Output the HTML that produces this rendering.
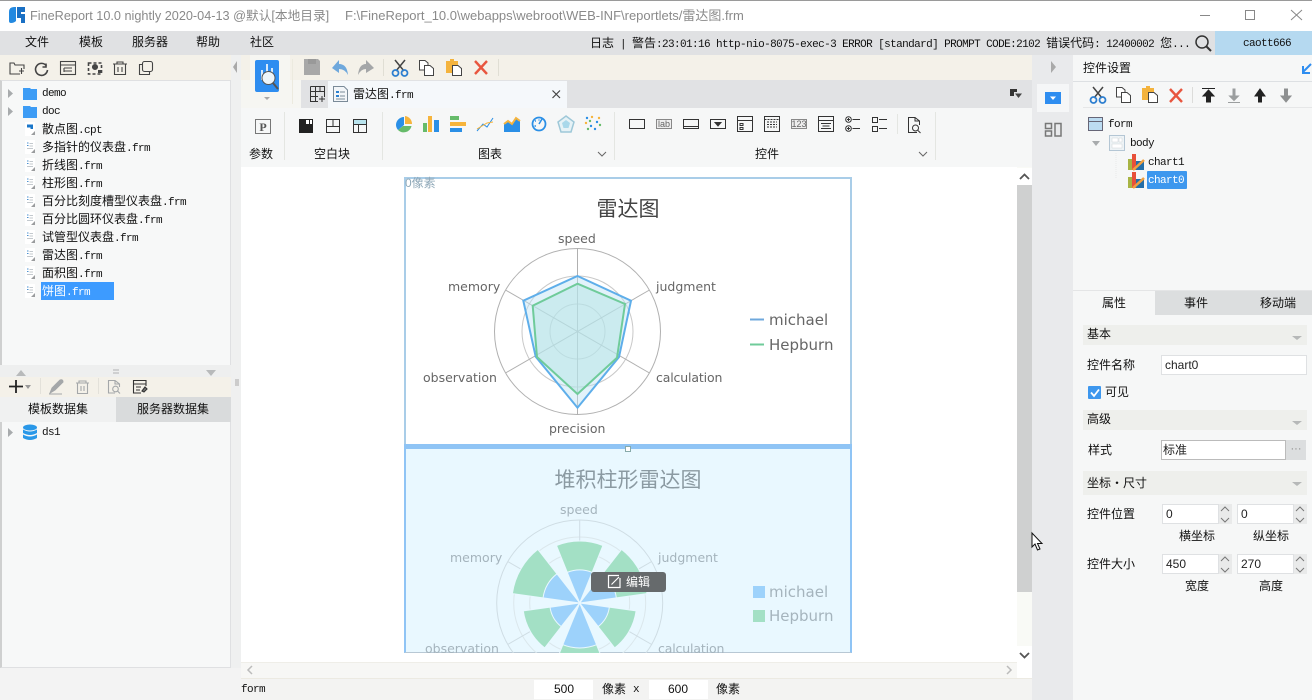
<!DOCTYPE html>
<html><head><meta charset="utf-8"><title>FineReport</title>
<style>
html,body{margin:0;padding:0;width:1312px;height:700px;overflow:hidden;background:#fff}
body{position:relative;font-family:"Liberation Sans","Noto Sans CJK SC",sans-serif;font-size:12px;color:#111}
.b{position:absolute}
.t{position:absolute;white-space:nowrap;line-height:14px;height:14px}
.m{font-family:"Liberation Mono","Noto Sans CJK SC",monospace;font-size:11px;letter-spacing:-.6px}
.m b{font-weight:400;font-size:12px;letter-spacing:0;font-family:"Noto Sans CJK SC",sans-serif}
.c{transform:translateX(-50%)}
svg{position:absolute;left:0;top:0}
.ch{font-family:"DejaVu Sans",sans-serif;font-size:12.5px;color:#666}
.ch2{font-family:"DejaVu Sans",sans-serif;font-size:12.5px;color:#a5b4bd}
.in{position:absolute;background:#fff;border:1px solid #dfe1e3;box-sizing:border-box;line-height:18px;padding-left:3px;font-size:12px;color:#222}
</style></head><body>

<!-- backgrounds -->
<div class="b" style="left:0;top:0;width:1312px;height:31px;background:#fff;border-top:1px solid #9a9a9a;box-sizing:border-box"></div>
<div class="b" style="left:0;top:31px;width:1312px;height:24px;background:#e0e1e3"></div>
<div class="b" style="left:1215px;top:31px;width:97px;height:24px;background:#b5d9f0"></div>
<div class="b" style="left:0;top:55px;width:231px;height:25px;background:#f4f1e9"></div>
<div class="b" style="left:0;top:80px;width:231px;height:288px;background:#f7f8f8;border:1px solid #dfe0e2;border-left:2px solid #cfd0d0;box-sizing:border-box"></div>
<div class="b" style="left:0;top:365px;width:231px;height:12px;background:#eeefef"></div>
<div class="b" style="left:0;top:377px;width:231px;height:20px;background:#f4f1e9"></div>
<div class="b" style="left:0;top:397px;width:116px;height:25px;background:#f0f1f1"></div>
<div class="b" style="left:116px;top:397px;width:115px;height:25px;background:#d9dbdc"></div>
<div class="b" style="left:0;top:422px;width:231px;height:246px;background:#f7f8f8;border-right:1px solid #dfe0e2;border-bottom:1px solid #dfe0e2;border-left:2px solid #cfd0d0;box-sizing:border-box"></div>
<div class="b" style="left:0;top:668px;width:241px;height:32px;background:#f3f3f3"></div>
<div class="b" style="left:231px;top:55px;width:10px;height:613px;background:#eff0f0"></div>
<div class="b" style="left:241px;top:55px;width:792px;height:25px;background:#f4f1e9"></div>
<div class="b" style="left:250px;top:55px;width:40px;height:50px;background:#f6f6f2"></div>
<div class="b" style="left:301px;top:80px;width:732px;height:28px;background:#e1e2e4"></div>
<div class="b" style="left:241px;top:80px;width:60px;height:28px;background:#f6f6f2"></div>
<div class="b" style="left:328px;top:81px;width:239px;height:27px;background:#f5f8fb"></div>
<div class="b" style="left:241px;top:108px;width:792px;height:59px;background:#f6f7f7"></div>
<div class="b" style="left:241px;top:167px;width:776px;height:495px;background:#fff"></div>
<div class="b" style="left:1017px;top:167px;width:15px;height:495px;background:#f9faf6"></div>
<div class="b" style="left:1017px;top:185px;width:15px;height:407px;background:#cfd0d0"></div>
<div class="b" style="left:1017px;top:168px;width:16px;height:17px;background:#fff"></div>
<div class="b" style="left:1017px;top:646px;width:16px;height:17px;background:#fff"></div>
<div class="b" style="left:241px;top:662px;width:776px;height:17px;background:#f7f7f5;border-top:1px solid #efeee8;box-sizing:border-box"></div>
<div class="b" style="left:241px;top:678px;width:792px;height:22px;background:#f3f3f2;border-top:1px solid #eceae2;box-sizing:border-box"></div>
<div class="b" style="left:534px;top:680px;width:59px;height:19px;background:#fff"></div>
<div class="b" style="left:649px;top:680px;width:59px;height:19px;background:#fff"></div>
<div class="b" style="left:1032px;top:55px;width:41px;height:645px;background:#e9eaec"></div>
<div class="b" style="left:1037px;top:84px;width:32px;height:28px;background:#f5f6f7"></div>
<div class="b" style="left:1073px;top:55px;width:239px;height:645px;background:#f6f7f7"></div>
<div class="b" style="left:1073px;top:81px;width:239px;height:1px;background:#dde0e3"></div>
<div class="b" style="left:1083px;top:107px;width:229px;height:1px;background:#e6e7e8"></div>
<div class="b" style="left:1073px;top:290px;width:239px;height:1px;background:#e4e5e6"></div>
<div class="b" style="left:1155px;top:291px;width:157px;height:24px;background:#dcdedf"></div>
<div class="b" style="left:1083px;top:325px;width:224px;height:20px;background:#eeefec"></div>
<div class="b" style="left:1083px;top:410px;width:224px;height:20px;background:#eeefec"></div>
<div class="b" style="left:1083px;top:471px;width:224px;height:24px;background:#eeefec"></div>
<div class="b" style="left:1218px;top:504px;width:14px;height:20px;background:#e9eaea"></div>
<div class="b" style="left:1293px;top:504px;width:14px;height:20px;background:#e9eaea"></div>
<div class="b" style="left:1218px;top:554px;width:14px;height:20px;background:#e9eaea"></div>
<div class="b" style="left:1293px;top:554px;width:14px;height:20px;background:#e9eaea"></div>

<!-- chart widget area -->
<div class="b" style="left:404px;top:177px;width:448px;height:268px;background:#fff;border:2px solid #a9cde8;border-bottom:none;box-sizing:border-box"></div>
<div class="b" style="left:404px;top:444px;width:448px;height:209px;background:#e9f8ff;border:2px solid #8fc4f5;border-top:5px solid #8fc4f5;border-bottom:1px solid #b8c8d4;box-sizing:border-box"></div>

<svg width="1312" height="700" viewBox="0 0 1312 700" fill="none">
<!-- logo -->
<path d="M9 12Q9 7 14 7H16V21Q14 23 11 23Q9 23 9 21Z" fill="#2389e0"/><path d="M17 7H25V12H21V14H25V23H21V18H17Z" fill="#1a70c4"/>
<!-- window controls -->
<path d="M1200 15.500H1210" stroke="#888"/><rect x="1245.500" y="10.500" width="9" height="9" stroke="#888"/><path d="M1291 10L1302 20M1302 10L1291 20" stroke="#888"/>
<!-- search -->
<circle cx="1202" cy="42" r="6" stroke="#333" stroke-width="1.500"/><path d="M1206.500 46.500L1211 51" stroke="#333" stroke-width="2"/>
<!-- left toolbar -->
<g stroke="#444" stroke-width="1.100">
<path d="M20 74H10V63H14L15 65H24V69M19 71H24M21.500 68V74"/>
<path d="M46 63.500V67H42.500M46.500 66A6 6 0 1 0 47.500 70" stroke-width="1.600"/>
<rect x="60.500" y="61.500" width="15" height="13"/><path d="M60.500 65H75.500M64 68H72M64 71H72M64 68V72"/>
<path d="M88.500 63H101.500V74H88.500Z" stroke-dasharray="3 2" stroke-width="1.600"/><circle cx="95" cy="67" r="2.500" fill="#444"/><rect x="98" y="70" width="3" height="3" fill="#444" stroke="none"/>
<path d="M113 64H127M117 64V62H123V64M114.500 64V74.500H125.500V64M118 67V72M122 67V72"/>
<rect x="142.500" y="61.500" width="10" height="10" rx="2"/><path d="M142 64.500H139.500V74.500H149.500V72"/>
</g>
<path d="M237 61V73L233 67Z" fill="#a9a9a9"/>
<!-- tree arrows -->
<path d="M8 89L13 93.500L8 98ZM8 107L13 111.500L8 116ZM8 428L13 432.500L8 437Z" fill="#a8abad"/>
<!-- folders -->
<path d="M23 88H30L31 89H37V100H23Z" fill="#3d9cf5"/><path d="M23 106H30L31 107H37V118H23Z" fill="#3d9cf5"/>
<!-- files -->
<path d="M25 122H35V133L33 136H25Z" fill="#fff"/><path d="M27 124.500H33V129H30.500V127.500H27Z" fill="#1976c9"/><path d="M31 135L35 131V135Z" fill="#9a9c9e"/>
<g id="f"><path d="M25 140H35V151L33 154H25Z" fill="#fff"/><path d="M29.500 143.500H33M29.500 146H33M27 148.500H33" stroke="#c3c9ce"/><path d="M27 143H28.500M27 145.500H28.500" stroke="#4a90d0"/><path d="M31 153L35 149V153Z" fill="#9a9c9e"/></g>
<use href="#f" y="18"/><use href="#f" y="36"/><use href="#f" y="54"/><use href="#f" y="72"/><use href="#f" y="90"/><use href="#f" y="108"/><use href="#f" y="126"/><use href="#f" y="144"/>
<!-- splitter -->
<path d="M16 376H26L21 370ZM206 370H216L211 376Z" fill="#b8babb"/><path d="M113 370H119M113 373H119" stroke="#b0b2b3"/>
<path d="M236 379V386M238 379V386" stroke="#a8a8a8"/>
<!-- lower left toolbar -->
<path d="M9 386.500H23M16 380V393" stroke="#222" stroke-width="1.800"/><path d="M25 385H31L28 389Z" fill="#999"/>
<path d="M40.500 378V394M98.500 378V394" stroke="#e3e1da"/>
<path d="M50 393L52 388L60 380Q63 379 63 382L55 390ZM49 394H62" fill="#a4a7a9" stroke="#a4a7a9"/>
<g stroke="#a4a7a9" stroke-width="1.100"><path d="M76 383H89M79 383V381H86V383M77.500 383V393.500H87.500V383M81 386V391M84 386V391"/>
<path d="M115 393H108.500V380.500H115L119.500 384V387M115 380.500V384H119.500"/><circle cx="115.500" cy="389" r="2.800"/><path d="M117.500 391L120 393.500"/></g>
<g stroke="#333" stroke-width="1.100"><path d="M146 386V380.500H133.500V393H141M133.500 384H146M136 387H141M136 390H140"/><path d="M142 391L145 387L147 389L144 392Z" fill="#777"/></g>
<!-- db -->
<ellipse cx="30" cy="427.500" rx="7" ry="3" fill="#2a98e8"/><path d="M23 429.500Q30 433.500 37 429.500V433Q30 437 23 433ZM23 434.500Q30 438.500 37 434.500V438Q30 442 23 438Z" fill="#2a98e8"/>
<!-- main button -->
<rect x="255" y="60" width="24" height="32" rx="2" fill="#2e8df0"/>
<path d="M262 70V80M267 64V74M272 68V80" stroke="#d6e9fb" stroke-width="2"/><circle cx="268.500" cy="78" r="6.500" fill="#eef5fa" stroke="#555"/><path d="M273 83L278 89" stroke="#555" stroke-width="2"/>
<path d="M264 97H270L267 100Z" fill="#a8a8a8"/><path d="M292.500 59V104" stroke="#eceadf"/>
<!-- main toolbar -->
<path d="M304 59H318L320 61V75H304Z" fill="#a8a8a8"/><path d="M308 59H316V64H308Z" fill="#999"/>
<path d="M332 68L339 60V64Q347 64 348 75Q345 69 339 69V73Z" fill="#6fa8dc"/>
<path d="M374 68L366 60V64Q359 64 358 75Q361 69 366 69V73Z" fill="#a4a6a8"/>
<path d="M383.500 59V76M498.500 59V76" stroke="#e0ded4"/>
<g id="sc"><path d="M395 60L404 71M405 60L396 71" stroke="#444" stroke-width="1.500"/><circle cx="395.500" cy="73" r="3" stroke="#2e7fd0" stroke-width="1.800"/><circle cx="404.500" cy="73" r="3" stroke="#2e7fd0" stroke-width="1.800"/></g>
<g id="cp"><path d="M419.500 60.500H425L428 63V70H419.500Z" fill="#fff" stroke="#444"/><path d="M424.500 65.500H430L433.500 68.500V75.500H424.500Z" fill="#fff" stroke="#444"/></g>
<g id="ps"><path d="M446 61H450V59H454V61H458V73H446Z" fill="#f4b33d"/><path d="M452.500 65.500H458L461.500 68.500V75.500H452.500Z" fill="#fff" stroke="#444"/></g>
<path id="xx" d="M475 61L487 74M487 61L475 74" stroke="#e8563f" stroke-width="2.400"/>
<!-- tab icons -->
<path d="M310.500 86.500H324.500V97M310.500 86.500V101.500H318M310.500 91.500H324.500M310.500 96.500H318M315.500 86.500V101.500M320 86.500V91.500" stroke="#333"/><path d="M322 96V102M319 99H325" stroke="#333"/>
<path d="M333.500 86.500H344L347.500 90V101.500H333.500Z" fill="#f2f5f8" stroke="#7a8a98"/><rect x="336" y="91" width="3" height="2" fill="#2a7fd0"/><rect x="336" y="95" width="3" height="2" fill="#2a7fd0"/><path d="M340 92H345M340 96H345M336 99H345" stroke="#7a8a98"/>
<path d="M552.500 90.500L560 98M560 90.500L552.500 98" stroke="#444" stroke-width="1.200"/>
<path d="M1010 89H1017V92H1014V96H1010Z" fill="#333"/><path d="M1015 93.500H1022L1018.500 98Z" fill="#444"/>
<!-- widget row separators -->
<path d="M284.500 112V160M382.500 112V160M614.500 112V160M935.500 112V160M897.500 114V134" stroke="#e4e6e2"/>
<!-- P -->
<rect x="255.500" y="119.500" width="15" height="14" stroke="#777"/><text x="263" y="131" font-family="Liberation Serif" font-size="12" font-weight="700" fill="#555" text-anchor="middle">P</text>
<rect x="299" y="119" width="14" height="14" fill="#222"/><rect x="306" y="120" width="3" height="4" fill="#fff"/><rect x="310" y="120" width="2" height="4" fill="#fff"/>
<rect x="326.500" y="119.500" width="13" height="13" stroke="#333"/><path d="M326.500 126.500H339.500M333 119.500V126.500" stroke="#333"/>
<rect x="353" y="119" width="14" height="5" fill="#b9e4ee"/><rect x="353.500" y="119.500" width="13" height="13" stroke="#333"/><path d="M353.500 124.500H366.500M358.500 124.500V132.500" stroke="#333"/>
<!-- charts -->
<path d="M404 125V117A8 8 0 0 0 396 125Z" fill="#2a8fe6"/><path d="M405 116A8 8 0 0 1 412 124H405Z" fill="#f6b43c"/><path d="M398 130A8 8 0 0 0 411.500 126H403Z" fill="#66bb6a"/><path d="M396 125A8 8 0 0 0 398 130L404 125Z" fill="#2a8fe6"/>
<rect x="423" y="123" width="4" height="9" fill="#66bb6a"/><rect x="428" y="116" width="4" height="16" fill="#f6b43c"/><rect x="434" y="120" width="5" height="12" fill="#2a8fe6"/>
<rect x="450" y="116" width="9" height="4" fill="#66bb6a"/><rect x="450" y="122" width="16" height="4" fill="#f6b43c"/><rect x="450" y="128" width="12" height="4" fill="#2a8fe6"/>
<path d="M477 131L483 124L487 127L493 118" stroke="#2a8fe6"/><path d="M477 129L482 126L487 123L493 122" stroke="#f6b43c"/>
<path d="M504 124L508 121L512 124L516 118L520 121V132H504Z" fill="#2a8fe6"/><path d="M504 124L508 121L512 124L516 118L520 121" stroke="#f6b43c" stroke-width="2"/>
<circle cx="539" cy="124" r="6.500" stroke="#2a8fe6" stroke-width="1.800"/><path d="M539 124L542 119M535 121H536M539 119.500V120.500M534.500 126H536" stroke="#2a8fe6" stroke-width="1.500"/>
<path d="M566 116L574 122L571 132H561L558 122Z" stroke="#9ec8d8" stroke-width="1.500" fill="#e6f2f6"/><path d="M566 120L570 123L568.500 128H563.500L562 123Z" fill="#a9d8ea"/>
<g fill="#2a8fe6"><circle cx="587" cy="118" r="1.200"/><circle cx="597" cy="122" r="1.200"/><circle cx="591" cy="126" r="1.200"/><circle cx="595" cy="129" r="1.200"/></g>
<g fill="#f6b43c"><circle cx="592" cy="117" r="1.200"/><circle cx="586" cy="123" r="1.200"/><circle cx="599" cy="118" r="1.200"/></g>
<g fill="#66bb6a"><circle cx="590" cy="121" r="1.200"/><circle cx="588" cy="129" r="1.200"/><circle cx="600" cy="125" r="1.200"/></g>
<path d="M598 152L602 156L606 152M919 152L923 156L927 152" stroke="#666"/>
<!-- controls -->
<g stroke="#333" stroke-width="1">
<rect x="629.500" y="119.500" width="15" height="9"/>
<rect x="656.500" y="119.500" width="15" height="9" fill="#eee" stroke="#888"/>
<rect x="683.500" y="119.500" width="15" height="9"/><path d="M683 126.500H699"/>
<rect x="710.500" y="119.500" width="15" height="9"/><path d="M715 122.500H721L718 126Z" fill="#333"/>
<rect x="737.500" y="116.500" width="15" height="15"/><path d="M737.500 120.500H752.500M740 123.500H743V125.500H740ZM740 127.500H743V129.500H740Z"/>
<rect x="764.500" y="116.500" width="15" height="15"/><path d="M764.500 119.500H779.500M767 122H777M767 124.500H777M767 127H777" stroke-dasharray="2 1"/>
<rect x="791.500" y="119.500" width="15" height="9" fill="#eee" stroke="#888"/>
<rect x="818.500" y="116.500" width="15" height="15"/><path d="M818.500 120.500H833.500M821 123.500H831M822.500 126H829.500M821 128.500H831"/>
<circle cx="848.500" cy="119.500" r="2.800"/><circle cx="848.500" cy="128.500" r="2.800"/><path d="M852.500 119.500H860M852.500 128.500H860"/>
<rect x="872.500" y="117.500" width="5" height="5"/><rect x="872.500" y="126.500" width="5" height="5"/><path d="M879 119.500H887M879 128.500H887"/>
<path d="M917 132.500H908.500V117.500H915L919.500 121V125M915 117.500V121H919.500"/><circle cx="915.500" cy="128" r="3"/><path d="M918 130.500L920.500 133"/>
</g>
<path d="M848.500 118v3M847 119.500h3M848.500 127v3M847 128.500h3" stroke="#333"/>
<text x="664" y="127" font-family="Liberation Sans" font-size="9" fill="#666" text-anchor="middle">lab</text>
<text x="799" y="127" font-family="Liberation Sans" font-size="9" fill="#666" text-anchor="middle">123</text>
<!-- scrollbars -->
<path d="M1020 179L1024.500 174.500L1029 179M1020 653L1024.500 657.500L1029 653" stroke="#555" stroke-width="1.800"/>
<path d="M252 666L248 670L252 674" stroke="#bbb" stroke-width="1.500"/><path d="M1007 666L1011 670L1007 674" stroke="#bbb" stroke-width="1.500"/>
<!-- right column -->
<path d="M1051 61V73L1056 67Z" fill="#a9a9a9"/>
<rect x="1045" y="92" width="16" height="12" fill="#2e8df0"/><path d="M1050 96.500H1056L1053 100Z" fill="#fff"/>
<rect x="1045.500" y="123.500" width="6" height="5" stroke="#777" stroke-width="1.500"/><rect x="1045.500" y="131" width="6" height="5" stroke="#777" stroke-width="1.500"/><rect x="1055" y="123.500" width="6" height="12.500" stroke="#777" stroke-width="1.500"/>
<path d="M1303 72L1311 64M1303 66V73H1310" stroke="#2e8df0" stroke-width="2"/>
<!-- right toolbar -->
<use href="#sc" x="698" y="27"/><use href="#cp" x="697" y="27"/><use href="#ps" x="696" y="27"/>
<path d="M1170 89L1182 102M1182 89L1170 102" stroke="#e8563f" stroke-width="2.400"/>
<path d="M1192.500 87V103" stroke="#dcdcda"/>
<path d="M1202 88.500H1215M1208.500 90L1214 96H1210.500V102H1206.500V96H1203Z" stroke="#222" fill="#222"/>
<path d="M1233 89V96H1229.500L1234 100.500L1238.500 96H1235V89Z M1228 102.500H1240" fill="#9b9e9f" stroke="#9b9e9f"/>
<path d="M1260 89L1265 96H1261.500V102H1258.500V96H1255Z" fill="#222" stroke="#222"/>
<path d="M1286 102L1291 96H1287.500V89H1284.500V96H1281Z" fill="#8e9091" stroke="#8e9091"/>
<!-- right tree -->
<rect x="1088.500" y="117.500" width="14" height="13" fill="#bcdcf2" stroke="#667"/><path d="M1088.500 121.500H1102.500" stroke="#667"/>
<path d="M1092 141H1100L1096 146Z" fill="#a8abad"/>
<rect x="1109.500" y="135.500" width="15" height="15" fill="#eef3f6" stroke="#b4c6d4"/><path d="M1112 138H1118V142H1112ZM1119 138H1122V142H1119ZM1112 144H1122V148H1112Z" fill="#fff" stroke="#d0d5d8" stroke-width=".5"/>
<path d="M1116 153V178" stroke="#e8eaea" stroke-dasharray="1 1"/>
<g id="ci"><rect x="1128" y="159" width="5" height="11" fill="#a8b444"/><rect x="1132" y="154" width="4" height="16" fill="#e8503a"/><rect x="1136" y="161" width="8" height="9" fill="#246ea8"/><path d="M1133 170L1144 160" stroke="#f0a040" stroke-width="2.500"/></g>
<use href="#ci" y="18"/>
<!-- props -->
<path d="M1292 336H1302L1297 340ZM1292 421H1302L1297 425ZM1292 482H1302L1297 486Z" fill="#b6b8b8"/>
<rect x="1088" y="386" width="13" height="13" rx="1" fill="#3d97ee"/><path d="M1091 392.500L1094 396L1099 389.500" stroke="#fff" stroke-width="1.800"/>
<!-- spinners -->
<g id="sp" stroke="#777"><path d="M1221 511L1225 507L1229 511M1221 518L1225 522L1229 518"/></g>
<use href="#sp" x="75"/><use href="#sp" y="50"/><use href="#sp" x="75" y="50"/>

<!-- radar 1 -->
<g stroke="#b0b0b0"><circle cx="577.500" cy="331.500" r="83"/><circle cx="577.500" cy="331.500" r="55.500" stroke="#c8c8c8"/><circle cx="577.500" cy="331.500" r="27.500" stroke="#c8c8c8"/>
<path d="M577.500 248.500V414.500M505.500 290L649.500 373M649.500 290L505.500 373"/></g>
<path d="M577.500 276L631 300.700L619 357L577.500 407.700L535.700 356.700L523.300 300.700Z" fill="#bfe3f4" fill-opacity=".45"/>
<path d="M577.500 283.700L625 304L617 357.700L577.500 394L537 357L532.700 305.700Z" fill="#b4e4e4" fill-opacity=".5"/>
<path d="M577.500 276L631 300.700L619 357L577.500 407.700L535.700 356.700L523.300 300.700Z" stroke="#5eaeea" stroke-width="2"/>
<path d="M577.500 283.700L625 304L617 357.700L577.500 394L537 357L532.700 305.700Z" stroke="#6fcb9a" stroke-width="2"/>
<path d="M750 319.500H764" stroke="#6fa8dc" stroke-width="2"/><path d="M750 344.500H764" stroke="#6fcb9a" stroke-width="2"/>

<!-- radar 2 -->
<clipPath id="cl"><rect x="406" y="449" width="444" height="204"/></clipPath>
<g clip-path="url(#cl)">
<g stroke="#cfdde4"><circle cx="579.700" cy="603" r="83"/><circle cx="579.700" cy="603" r="66" stroke="#dbe7ec"/><circle cx="579.700" cy="603" r="50" stroke="#dbe7ec"/>
<path d="M579.700 520V686M507.700 561.500L651.700 644.500M651.700 561.500L507.700 644.500"/></g>
<g transform="translate(579.700 603)" stroke="#e9f8ff">
<g fill="#a3e0c5">
<path id="w1" d="M-23.200 -57.500A62 62 0 0 1 23.200 -57.500L0 0Z"/>
<path d="M-25.500 -63A68 68 0 0 1 25.500 -63L0 0Z" transform="rotate(60)"/>
<path d="M-21.400 -52.800A57 57 0 0 1 21.400 -52.800L0 0Z" transform="rotate(120)"/>
<path d="M-26.200 -64.900A70 70 0 0 1 26.200 -64.900L0 0Z" transform="rotate(180)"/>
<path d="M-21.400 -52.800A57 57 0 0 1 21.400 -52.800L0 0Z" transform="rotate(240)"/>
<path d="M-25.500 -63A68 68 0 0 1 25.500 -63L0 0Z" transform="rotate(300)"/>
</g>
<g fill="#9dd2fb">
<path d="M-12.400 -30.600A33 33 0 0 1 12.400 -30.600L0 0Z"/>
<path d="M-13.900 -34.300A37 37 0 0 1 13.900 -34.300L0 0Z" transform="rotate(60)"/>
<path d="M-11.200 -27.800A30 30 0 0 1 11.200 -27.800L0 0Z" transform="rotate(120)"/>
<path d="M-16.900 -41.700A45 45 0 0 1 16.900 -41.700L0 0Z" transform="rotate(180)"/>
<path d="M-11.200 -27.800A30 30 0 0 1 11.200 -27.800L0 0Z" transform="rotate(240)"/>
<path d="M-13.900 -34.300A37 37 0 0 1 13.900 -34.300L0 0Z" transform="rotate(300)"/>
</g></g></g>
<rect x="753" y="586" width="12" height="12" fill="#9dd2fb"/><rect x="753" y="610" width="12" height="12" fill="#a3e0c5"/>
<rect x="625.500" y="446.500" width="5" height="5" fill="#fff" stroke="#8aa"/>
<rect x="591" y="572" width="75" height="20" rx="3" fill="#666a6c"/>
<path d="M619 575.500H608.500V587.500H620V578M611.500 584.500L619 577" stroke="#fff" stroke-width="1.200"/>
<!-- cursor -->
<path d="M1032 533V547L1035 544L1037.500 550L1040 549L1037.500 543.500L1042 543.500Z" fill="#fff" stroke="#111"/>
</svg>

<!-- text -->
<div class="t" style="left:30px;top:9px;font-size:12.700px;color:#8a8a8a">FineReport 10.0 nightly 2020-04-13 @默认[本地目录]</div>
<div class="t" style="left:345px;top:9px;font-size:13px;color:#8a8a8a">F:\FineReport_10.0\webapps\webroot\WEB-INF\reportlets/雷达图.frm</div>
<div class="t" style="left:25px;top:35px">文件</div><div class="t" style="left:79px;top:35px">模板</div><div class="t" style="left:132px;top:35px">服务器</div><div class="t" style="left:196px;top:35px">帮助</div><div class="t" style="left:250px;top:35px">社区</div>
<div class="t m" style="left:590px;top:36px"><b>日志</b> | <b>警告</b>:23:01:16 http-nio-8075-exec-3 ERROR [standard] PROMPT CODE:2102 <b>错误代码</b>: 12400002 <b>您</b>...</div>
<div class="t m" style="left:1243px;top:37px">caott666</div>

<div class="t m" style="left:42px;top:87px">demo</div>
<div class="t m" style="left:42px;top:105px">doc</div>
<div class="t m" style="left:42px;top:122px"><b>散点图</b>.cpt</div>
<div class="t m" style="left:42px;top:140px"><b>多指针的仪表盘</b>.frm</div>
<div class="t m" style="left:42px;top:158px"><b>折线图</b>.frm</div>
<div class="t m" style="left:42px;top:176px"><b>柱形图</b>.frm</div>
<div class="t m" style="left:42px;top:194px"><b>百分比刻度槽型仪表盘</b>.frm</div>
<div class="t m" style="left:42px;top:212px"><b>百分比圆环仪表盘</b>.frm</div>
<div class="t m" style="left:42px;top:230px"><b>试管型仪表盘</b>.frm</div>
<div class="t m" style="left:42px;top:248px"><b>雷达图</b>.frm</div>
<div class="t m" style="left:42px;top:266px"><b>面积图</b>.frm</div>
<div class="b" style="left:41px;top:282px;width:73px;height:18px;background:#3d9bff"></div>
<div class="t m" style="left:42px;top:284px;color:#fff"><b>饼图</b>.frm</div>
<div class="t" style="left:28px;top:402px">模板数据集</div><div class="t" style="left:137px;top:402px">服务器数据集</div>
<div class="t m" style="left:42px;top:426px">ds1</div>

<div class="t m" style="left:353px;top:87px"><b>雷达图</b>.frm</div>
<div class="t" style="left:249px;top:147px">参数</div><div class="t" style="left:314px;top:147px">空白块</div><div class="t" style="left:478px;top:147px">图表</div><div class="t" style="left:755px;top:147px">控件</div>

<div class="t" style="left:405px;top:176px;font-size:12px;color:#8fa8b8">0像素</div>
<div class="t c" style="left:628px;top:199px;font-size:21px;line-height:21px;height:21px;color:#444">雷达图</div>
<div class="t ch" style="left:558px;top:232px">speed</div>
<div class="t ch" style="left:448px;top:280px">memory</div>
<div class="t ch" style="left:656px;top:280px">judgment</div>
<div class="t ch" style="left:423px;top:371px">observation</div>
<div class="t ch" style="left:656px;top:371px;letter-spacing:-.15px">calculation</div>
<div class="t ch" style="left:549px;top:422px">precision</div>
<div class="t ch" style="left:769px;top:313px;font-size:15px">michael</div>
<div class="t ch" style="left:769px;top:338px;font-size:15px">Hepburn</div>

<div class="t c" style="left:628px;top:470px;font-size:21px;line-height:21px;height:21px;color:#8b9aa2">堆积柱形雷达图</div>
<div class="t ch2" style="left:560px;top:503px">speed</div>
<div class="t ch2" style="left:450px;top:551px">memory</div>
<div class="t ch2" style="left:658px;top:551px">judgment</div>
<div class="t ch2" style="left:425px;top:642px">observation</div>
<div class="t ch2" style="left:658px;top:642px;letter-spacing:-.15px">calculation</div>
<div class="t ch2" style="left:769px;top:585px;font-size:15px">michael</div>
<div class="t ch2" style="left:769px;top:609px;font-size:15px">Hepburn</div>
<div class="t" style="left:626px;top:575px;color:#fff">编辑</div>

<div class="t m" style="left:241px;top:683px">form</div>
<div class="t c" style="left:564px;top:682px">500</div>
<div class="t" style="left:602px;top:682px">像素</div><div class="t m" style="left:633px;top:683px">x</div>
<div class="t c" style="left:678px;top:682px">600</div>
<div class="t" style="left:716px;top:682px">像素</div>

<div class="t" style="left:1083px;top:61px">控件设置</div>
<div class="t m" style="left:1108px;top:118px">form</div>
<div class="t m" style="left:1130px;top:137px">body</div>
<div class="t m" style="left:1148px;top:156px">chart1</div>
<div class="b" style="left:1147px;top:171px;width:40px;height:18px;background:#3d97ee;border-radius:1px"></div>
<div class="t m" style="left:1148px;top:174px;color:#fff">chart0</div>

<div class="t" style="left:1102px;top:296px">属性</div><div class="t" style="left:1184px;top:296px">事件</div><div class="t" style="left:1260px;top:296px">移动端</div>
<div class="t" style="left:1087px;top:327px">基本</div>
<div class="t" style="left:1087px;top:358px">控件名称</div>
<div class="in" style="left:1161px;top:355px;width:146px;height:20px">chart0</div>
<div class="t" style="left:1105px;top:385px">可见</div>
<div class="t" style="left:1087px;top:412px">高级</div>
<div class="t" style="left:1088px;top:443px">样式</div>
<div class="in" style="left:1161px;top:440px;width:125px;height:20px;border-color:#bbb;padding-left:1px">标准</div>
<div class="b" style="left:1286px;top:440px;width:20px;height:20px;background:#dcdedf;color:#888;text-align:center;line-height:18px;font-size:11px">···</div>
<div class="t" style="left:1087px;top:476px">坐标・尺寸</div>
<div class="t" style="left:1087px;top:507px">控件位置</div>
<div class="in" style="left:1162px;top:504px;width:57px;height:20px">0</div>
<div class="in" style="left:1237px;top:504px;width:57px;height:20px">0</div>
<div class="t c" style="left:1197px;top:529px">横坐标</div><div class="t c" style="left:1271px;top:529px">纵坐标</div>
<div class="t" style="left:1087px;top:557px">控件大小</div>
<div class="in" style="left:1162px;top:554px;width:57px;height:20px">450</div>
<div class="in" style="left:1237px;top:554px;width:57px;height:20px">270</div>
<div class="t c" style="left:1197px;top:579px">宽度</div><div class="t c" style="left:1271px;top:579px">高度</div>
</body></html>
